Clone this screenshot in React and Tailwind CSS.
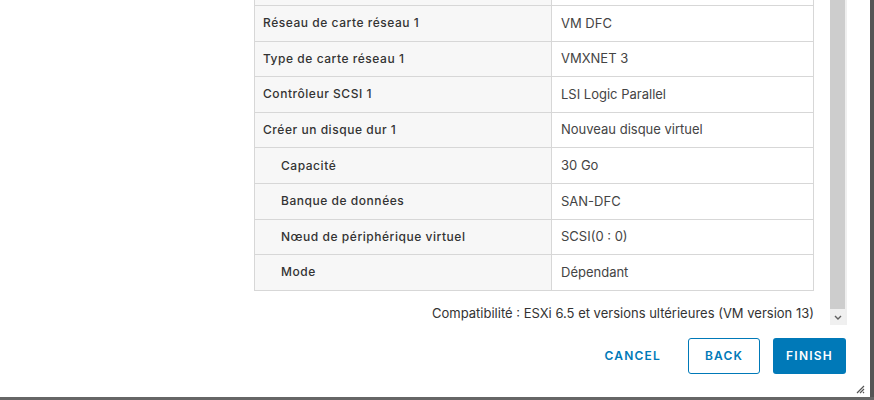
import React from "react";

const rows = [
  { label: "Réseau de carte réseau 1", value: "VM DFC" },
  { label: "Type de carte réseau 1", value: "VMXNET 3" },
  { label: "Contrôleur SCSI 1", value: "LSI Logic Parallel" },
  { label: "Créer un disque dur 1", value: "Nouveau disque virtuel" },
  { label: "Capacité", value: "30 Go", sub: true },
  { label: "Banque de données", value: "SAN-DFC", sub: true },
  { label: "Nœud de périphérique virtuel", value: "SCSI(0 : 0)", sub: true },
  { label: "Mode", value: "Dépendant", sub: true },
];

function Row({ label, value, sub }) {
  return (
    <div className="flex h-[35.6px] border-b border-[#d7d7d7]">
      <div
        className={`w-[297px] shrink-0 bg-[#f7f7f7] border-r border-[#d7d7d7] flex items-center text-[12px] font-medium tracking-[0.045em] text-[#333] ${
          sub ? "pl-[26px]" : "pl-[8px]"
        }`}
      >
        {label}
      </div>
      <div className="flex-1 flex items-center pl-[9px] text-[13px] text-[#444]">{value}</div>
    </div>
  );
}

export default function App() {
  return (
    <div
      className="w-[874px] h-[400px] bg-white flex flex-col overflow-hidden"
      style={{ fontFamily: "Inter, 'Liberation Sans', sans-serif" }}
    >
      <div className="flex flex-1 min-h-0">
        <div className="w-[870px] flex flex-col">
          <div className="flex">
            <div className="w-[830px] pl-[254px] pr-[16px] flex flex-col">
              <div className="border-x border-[#d7d7d7]">
                <div className="flex h-[6px] border-b border-[#d7d7d7]">
                  <div className="w-[297px] shrink-0 bg-[#f7f7f7] border-r border-[#d7d7d7]" />
                  <div className="flex-1" />
                </div>
                {rows.map((r) => (
                  <Row key={r.label} {...r} />
                ))}
              </div>
              <div className="mt-[13px] text-right text-[13px] text-[#333] leading-[18px]">
                Compatibilité : ESXi 6.5 et versions ultérieures (VM version 13)
              </div>
            </div>
            <div className="w-[15px] h-[325px] flex flex-col">
              <div className="flex-1 bg-[#cdcdcd]" />
              <div className="h-[16px] bg-[#f0f0f0] flex items-center justify-center">
                <svg width="8" height="5" viewBox="0 0 8 5">
                  <path d="M1 1l3 3 3-3" stroke="#606060" strokeWidth="1.4" fill="none" />
                </svg>
              </div>
            </div>
            <div className="w-[2px] h-[325px] bg-[#efefef]" />
          </div>
          <div className="flex justify-end items-center pr-[24px] mt-[13px] gap-[13px]">
            <button className="h-[36px] px-[12px] text-[12px] font-semibold tracking-[0.1em] text-[#0079b8]">
              CANCEL
            </button>
            <button className="h-[36px] w-[72px] ml-[2px] rounded-[3px] border border-[#0079b8] text-[12px] font-semibold tracking-[0.1em] text-[#0079b8]">
              BACK
            </button>
            <button className="h-[36px] w-[73px] rounded-[3px] bg-[#0079b8] text-[12px] font-semibold tracking-[0.1em] text-white">
              FINISH
            </button>
          </div>
          <div className="flex justify-end pr-[5px] mt-[11px]">
            <svg width="9" height="9" viewBox="0 0 9 9">
              <path d="M8 1L1 8M8 4L4 8M8 7L7 8" stroke="#555" strokeWidth="1.2" />
            </svg>
          </div>
        </div>
        <div className="w-[4px] bg-[#555]" />
      </div>
      <div className="h-[3px] bg-[#666] shrink-0" />
    </div>
  );
}
